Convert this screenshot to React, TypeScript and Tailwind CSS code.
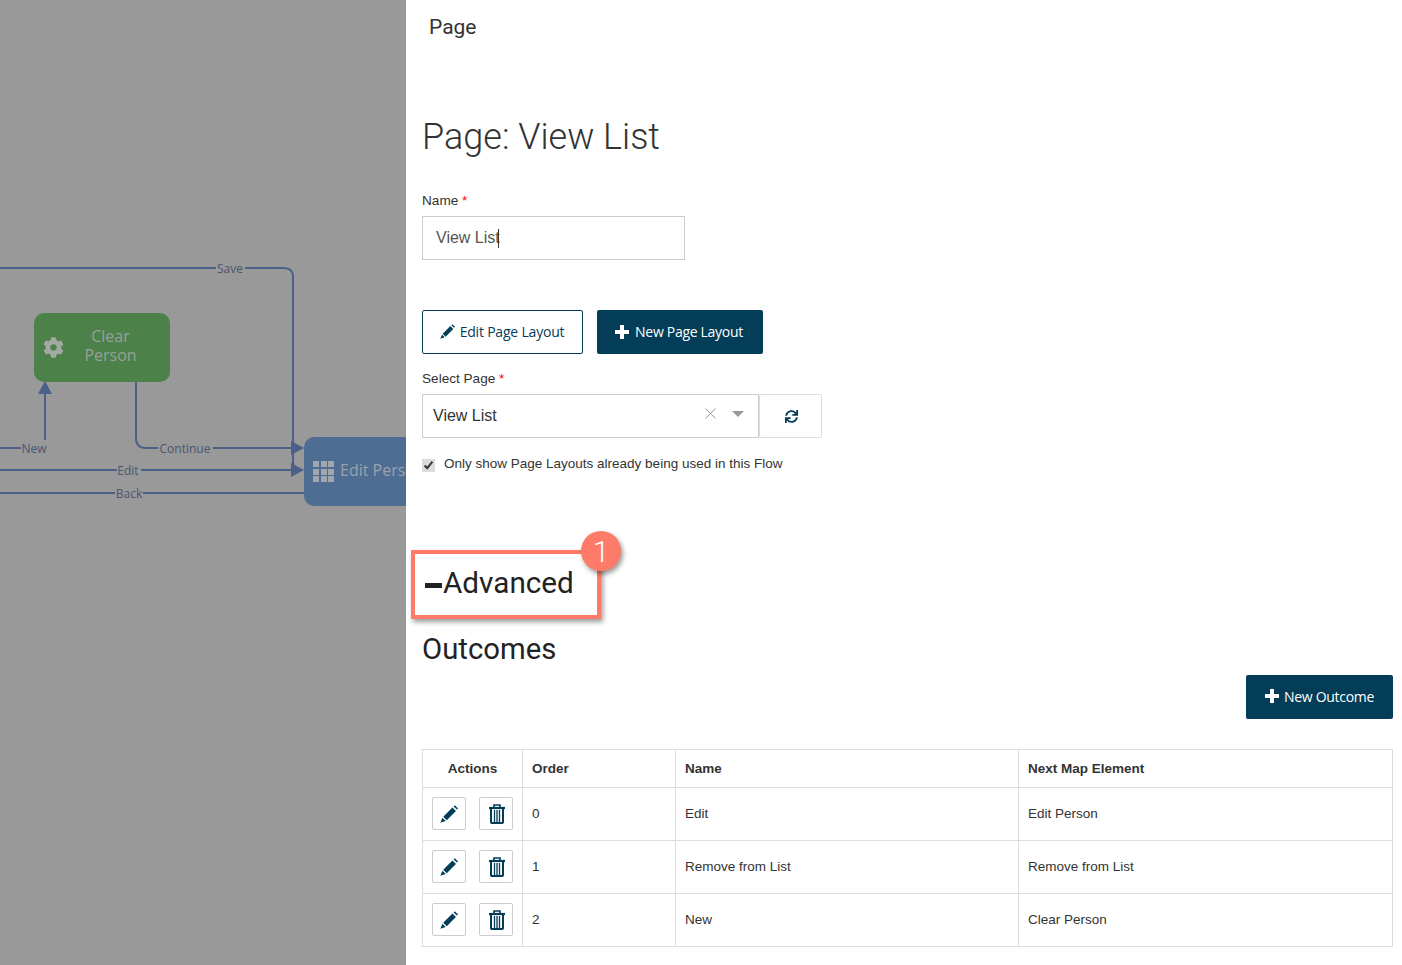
import { FaCog, FaSync } from "react-icons/fa";

const outcomes = [
  { order: 0, name: "Edit", next: "Edit Person" },
  { order: 1, name: "Remove from List", next: "Remove from List" },
  { order: 2, name: "New", next: "Clear Person" },
];

function TrashIcon() {
  return (
    <svg width="16" height="20" viewBox="0 0 16 20" fill="none" stroke="#033d58" className="ml-[2px]">
      <path d="M5 3V1h6v2" strokeWidth="1.6" />
      <path d="M0 4h16" strokeWidth="2.200" />
      <path d="M2 5v13.200a.8.8 0 0 0 .8.800h10.400a.8.8 0 0 0 .8-.8V5" strokeWidth="2" />
      <path d="M5.500 6v12M8 6v12M10.500 6v12" strokeWidth="1.300" />
    </svg>
  );
}

function PencilIcon({ size }: { size: number }) {
  return (
    <svg width={size} height={size} viewBox="0 0 20 20" fill="#033d58">
      <path d="M13.800 2.800L17.700 6.700L7.500 16.900L3.600 13Z" />
      <path d="M15.200 1.600L16.500.3L20 3.800L18.800 5.100Z" />
      <path d="M2.800 14.100L6.300 17.700L.3 19.800Z" />
    </svg>
  );
}

function PlusIcon() {
  return (
    <svg width="14" height="14" viewBox="0 0 14 14" fill="#fff">
      <path d="M5 0h4v5h5v4H9v5H5V9H0V5h5Z" />
    </svg>
  );
}

function FlowLines() {
  return (
    <svg className="absolute inset-0" width="406" height="965" fill="none">
      <g stroke="#4c5f86" strokeWidth="2">
        <path d="M0 268H216M245 268H284Q293 268 293 277V468" />
        <path d="M0 448H21M45 440V392" />
        <path d="M136 382V438Q136 448 146 448H158M213 448H296" />
        <path d="M0 470H117M141 470H296" />
        <path d="M0 493H115M143 493H304" />
      </g>
      <g fill="#4c5f86">
        <path d="M45 381L52 394H38Z" />
        <path d="M304 448L291 441V455Z" />
        <path d="M304 470L291 463V477Z" />
      </g>
      <g fill="#4a5572" fontSize="12" textAnchor="middle" fontFamily="'Open Sans', sans-serif">
        <text x="230" y="273">Save</text>
        <text x="34" y="453">New</text>
        <text x="185" y="453">Continue</text>
        <text x="128" y="475">Edit</text>
        <text x="129" y="498">Back</text>
      </g>
    </svg>
  );
}

function Label({ text }: { text: string }) {
  return (
    <div className="text-[13.600px] leading-[20px] text-[#333]">
      {text} <span className="text-[#f00]">*</span>
    </div>
  );
}

function IconButton({ children }: { children: React.ReactNode }) {
  return (
    <button className="flex h-[33px] w-[34px] items-center justify-center rounded-[2px] border border-[#ccc] bg-white">
      {children}
    </button>
  );
}

export default function App() {
  return (
    <div className="flex h-[965px] w-[1402px] overflow-hidden bg-white font-['Liberation_Sans',sans-serif] text-[#333]">
      <aside className="relative w-[406px] shrink-0 overflow-hidden bg-[#999999] font-['Open_Sans',sans-serif]">
        <FlowLines />
        <div className="absolute left-[34px] top-[313px] flex h-[69px] w-[136px] items-center rounded-[10px] bg-[#4c8249] text-[#9a9f9a]">
          <FaCog className="ml-[9px] shrink-0 text-[21px] text-[#a3a8a3]" />
          <div className="flex-1 pb-[4px] pr-[13px] text-center text-[16px] leading-[19px]">
            Clear
            <br />
            Person
          </div>
        </div>
        <div className="absolute left-[304px] top-[437px] flex h-[69px] w-[140px] items-center rounded-l-[10px] bg-[#4f6d92] text-[16px] text-[#9aa3ad]">
          <div className="ml-[9px] grid grid-cols-3 gap-[1.500px]">
            {Array.from({ length: 9 }).map((_, i) => (
              <span key={i} className="h-[6px] w-[6px] bg-[#a0a6ad]" />
            ))}
          </div>
          <span className="mb-[4px] ml-[6px] whitespace-nowrap">Edit Person</span>
        </div>
      </aside>

      <main className="relative flex-1 pl-4 pr-[9px]">
        <div className="pl-[7px] pt-[13px] font-['Roboto',sans-serif] text-[21px] leading-[28px] text-[#333]">Page</div>

        <h1 className="mt-[74px] font-['Roboto',sans-serif] text-[36px] font-light leading-[44px] text-[#333]">
          Page: View List
        </h1>

        <div className="mt-[32px]">
          <Label text="Name" />
        </div>
        <div className="mt-[5px] flex h-[44px] w-[263px] items-center border border-[#ccc] pl-[13px] text-[16px] text-[#555]">
          View List
          <span className="ml-[-2px] h-[19px] w-px bg-[#333]" />
        </div>

        <div className="mt-[50px] flex gap-[14px] font-['Open_Sans',sans-serif] text-[14px]">
          <button className="flex h-[44px] w-[161px] items-center justify-center gap-[5px] rounded-[2px] border border-[#033d58] bg-white pb-px pr-px tracking-[-0.2px] text-[#033d58]">
            <PencilIcon size={15} />
            Edit Page Layout
          </button>
          <button className="flex h-[44px] w-[166px] items-center justify-center gap-[6px] rounded-[2px] bg-[#033d58] pb-px pr-[2px] tracking-[-0.3px] text-white">
            <PlusIcon />
            New Page Layout
          </button>
        </div>

        <div className="mt-[15px]">
          <Label text="Select Page" />
        </div>
        <div className="mt-[5px] flex h-[44px]">
          <div className="flex w-[337px] items-center border border-[#ccc] pl-[10px] pr-[14px] text-[16px] text-[#333]">
            <span className="flex-1">View List</span>
            <svg width="11" height="11" viewBox="0 0 11 11" className="mb-[5px] mr-[16px]" stroke="#999" fill="none">
              <path d="M.5.500l10 10M10.500.500l-10 10" />
            </svg>
            <span className="mb-[4px] border-x-[6px] border-t-[6px] border-x-transparent border-t-[#999]" />
          </div>
          <button className="flex w-[63px] items-center justify-center rounded-[2px] border border-[#ddd] bg-white pl-px">
            <FaSync className="text-[13px] text-[#033d58]" />
          </button>
        </div>

        <label className="mt-[16px] flex h-[20px] items-center text-[13.500px] text-[#333]">
          <input type="checkbox" defaultChecked className="h-[13px] w-[13px] translate-y-px accent-[#dcdcdc]" />
          <span className="ml-[9px]">Only show Page Layouts already being used in this Flow</span>
        </label>

        <h2 className="mt-[89px] flex h-[40px] items-center pl-[3px] font-['Roboto',sans-serif] text-[29.700px] leading-[40px] text-[#222]">
          <span className="mr-px h-[5px] w-[17px] translate-y-[2px] bg-[#222]" />
          Advanced
        </h2>
        <h2 className="mt-[26px] font-['Roboto',sans-serif] text-[29.300px] leading-[40px] text-[#222]">Outcomes</h2>

        <div className="mt-[6px] flex justify-end">
          <button className="flex h-[44px] w-[147px] items-center justify-center gap-[5px] rounded-[2px] bg-[#033d58] pb-[2px] font-['Open_Sans',sans-serif] text-[14px] tracking-[-0.3px] text-white">
            <PlusIcon />
            New Outcome
          </button>
        </div>

        <table className="mt-[30px] w-[971px] table-fixed border-collapse text-[13.500px] text-[#333]">
          <thead>
            <tr className="h-[38px] text-left font-bold">
              <th className="w-[100px] border border-[#ddd] pt-px text-center">Actions</th>
              <th className="w-[153px] border border-[#ddd] pl-[9px] pt-px">Order</th>
              <th className="w-[343px] border border-[#ddd] pl-[9px] pt-px">Name</th>
              <th className="border border-[#ddd] pl-[9px] pt-px">Next Map Element</th>
            </tr>
          </thead>
          <tbody>
            {outcomes.map((row) => (
              <tr key={row.order} className="h-[53px]">
                <td className="border border-[#ddd] px-[9px]">
                  <div className="flex justify-between pb-[1px]">
                    <IconButton>
                      <PencilIcon size={18} />
                    </IconButton>
                    <IconButton>
                      <TrashIcon />
                    </IconButton>
                  </div>
                </td>
                <td className="border border-[#ddd] pl-[9px]">{row.order}</td>
                <td className="border border-[#ddd] pl-[9px]">{row.name}</td>
                <td className="border border-[#ddd] pl-[9px]">{row.next}</td>
              </tr>
            ))}
          </tbody>
        </table>

        {/* callout drawn over the Advanced heading */}
        <div className="pointer-events-none absolute left-[5px] top-[550px] h-[69px] w-[190px] border-[4px] border-[#fd7b68] shadow-[2px_3px_5px_rgba(0,0,0,0.4)]" />
        <div className="absolute left-[175px] top-[531px] flex h-[40px] w-[40px] items-center justify-center rounded-full bg-[#fd7b68] font-['Roboto',sans-serif] text-[30px] font-light text-white shadow-[2px_3px_5px_rgba(0,0,0,0.4)]">
          1
        </div>
      </main>
    </div>
  );
}
